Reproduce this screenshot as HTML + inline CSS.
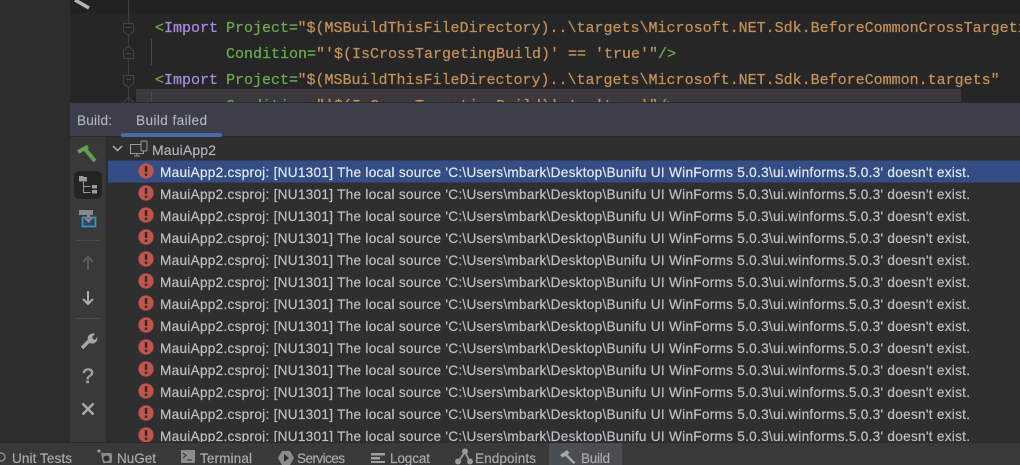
<!DOCTYPE html>
<html><head><meta charset="utf-8"><style>
html,body{margin:0;padding:0;width:1020px;height:465px;overflow:hidden;background:#2b2b2b}
svg{display:block}
.c{font-family:"Liberation Mono",monospace;font-size:15px;stroke-width:.25px}
.u{font-family:"Liberation Sans",sans-serif;font-size:13.6px}
.g{fill:#6aab4f;stroke:#6aab4f}.o{fill:#c39059;stroke:#c39059}.p{fill:#a58ce0;stroke:#a58ce0}
.r{fill:#bcc0c4;stroke:#bcc0c4;stroke-width:.2px}
.t{stroke:#a9adb1;stroke-width:.15px}
</style></head><body>
<svg width="1020" height="465" viewBox="0 0 1020 465" xmlns="http://www.w3.org/2000/svg">
<rect width="1020" height="465" fill="#2d2d2d"/>
<rect x="70" y="0" width="950" height="13" fill="#212223"/>
<rect x="70" y="13" width="950" height="90" fill="#262626"/>
<rect x="136" y="89" width="825" height="13" fill="#3b393e"/>
<path d="M75 0L89 8" stroke="#b5b5b5" stroke-width="3.500" fill="none"/>
<path d="M128.500 0V102" stroke="#3e3e3e" fill="none"/>
<g fill="#262626" stroke="#444">
<path d="M123.500 23.500h10v8l-5 4l-5-4z"/>
<path d="M123.500 58.500v-8l5-4l5 4v8z"/>
<path d="M123.500 75.500h10v8l-5 4l-5-4z"/>
</g>
<path d="M123.500 102l5-4l5 4" stroke="#4a4a4a" fill="none"/>
<path d="M126 27.500h5M126 53.500h5M126 79.500h5" stroke="#4a4a4a"/>
<path d="M151.500 39V65M151.500 91V102" stroke="#4a4a4a"/>
<g class="c" style="white-space:pre">
<text x="155" y="32" class="g">&lt;</text><text x="164" y="32" class="p">Import</text><text x="226" y="32" class="g">Project=</text><text x="297.500" y="32" class="o">"$(MSBuildThisFileDirectory)..\targets\Microsoft.NET.Sdk.BeforeCommonCrossTargeting.targets"</text>
<text x="226" y="58" class="g">Condition=</text><text x="316" y="58" class="o">"'$(IsCrossTargetingBuild)'</text><text x="568" y="58" class="o">==</text><text x="595" y="58" class="o">'true'"</text><text x="658" y="58" class="g">/&gt;</text>
<text x="155" y="84" class="g">&lt;</text><text x="164" y="84" class="p">Import</text><text x="226" y="84" class="g">Project=</text><text x="297.500" y="84" class="o">"$(MSBuildThisFileDirectory)..\targets\Microsoft.NET.Sdk.BeforeCommon.targets"</text>
</g>
<svg x="0" y="85" width="1020" height="17" viewBox="0 85 1020 17"><g class="c"><text x="226" y="110" class="g">Condition=</text><text x="316" y="110" class="o">"'$(IsCrossTargetingBuild)'</text><text x="568" y="110" class="o">!=</text><text x="595" y="110" class="o">'true'"</text><text x="658" y="110" class="g">/&gt;</text></g></svg>
<rect x="0" y="0" width="70" height="465" fill="#2d2d2d"/>
<rect x="70" y="102" width="950" height="34" fill="#3c3f4a"/>
<rect x="70" y="102" width="950" height="1" fill="#2a2a2a"/>
<rect x="70" y="136" width="950" height="1" fill="#292a2c"/>
<rect x="70" y="137" width="36" height="305" fill="#393939"/>
<rect x="106" y="137" width="1" height="305" fill="#2b2b2b"/>
<rect x="107" y="137" width="913" height="305" fill="#2f2f2f"/>
<text x="77" y="125" class="u t" fill="#b4b8bf" textLength="35">Build:</text>
<text x="136" y="125" class="u t" fill="#b4b8bf" textLength="71">Build failed</text>
<rect x="121" y="133" width="101" height="4" rx="2" fill="#4a6aa5"/>
<rect x="108" y="160.500" width="912" height="22" fill="#344d84"/>
<!-- left toolbar -->
<path d="M78 152L88 146.500" stroke="#62a04a" stroke-width="4" fill="none"/>
<path d="M85 149L95 161" stroke="#62a04a" stroke-width="4" fill="none"/>
<rect x="74" y="171" width="28" height="28" rx="5" fill="#242424"/>
<path d="M79 176h4l1 1h3v4.500h-8z" fill="#9a9a9a"/>
<path d="M83.500 182v10.500h7M83.500 186.500h7" stroke="#9a9a9a" fill="none"/>
<rect x="92" y="185" width="5" height="3.500" fill="#9a9a9a"/><rect x="92" y="190" width="5" height="3.500" fill="#9a9a9a"/>
<rect x="79" y="210" width="14" height="5" fill="#8a8a8a"/>
<rect x="82.500" y="217.500" width="13" height="9" fill="#2d4a5e" stroke="#3d93c8" stroke-width="1.700"/>
<path d="M84 218l4.500 5l4.500-5zM87 213h3v6h-3z" fill="#888"/>
<rect x="76" y="240" width="24" height="1" fill="#4c4c4c"/>
<path d="M88 270V257M83 262l5-5l5 5" stroke="#5b5b5b" stroke-width="2" fill="none"/>
<path d="M88 291V304M83 299l5 5l5-5" stroke="#aeaeae" stroke-width="2" fill="none"/>
<rect x="76" y="318" width="24" height="1" fill="#4c4c4c"/>
<path d="M82 348L91 339" stroke="#a6a6a6" stroke-width="3.500" fill="none"/>
<path d="M88 340a5 5 0 0 1 7-6l-3 3l1 2l2 1l2-3a5 5 0 0 1-7 6z" fill="#a6a6a6"/>
<text x="88" y="383" text-anchor="middle" font-family="Liberation Sans,sans-serif" font-size="21" fill="#a0a0a0" stroke="#a0a0a0" stroke-width=".6">?</text>
<path d="M82.500 403.500L93.500 414.500M93.500 403.500L82.500 414.500" stroke="#a8a8a8" stroke-width="2.500" fill="none"/>
<!-- tree -->
<path d="M113 146l4.500 4.500l4.500-4.500" stroke="#aeb0b3" stroke-width="1.500" fill="none"/>
<rect x="130.500" y="144.500" width="13" height="9" fill="none" stroke="#9a9a9a"/>
<path d="M134 156h6M137 154v2" stroke="#9a9a9a"/>
<rect x="141" y="141" width="6" height="10" rx="1" fill="#2f2f2f" stroke="#9a9a9a"/>
<text x="152" y="155" class="u t" fill="#b4b8bf" textLength="64" style="font-size:14px">MauiApp2</text>
<defs>
<g id="e"><circle cx="146" cy="0" r="7.600" fill="#c2544e"/><rect x="144.800" y="-5" width="2.500" height="6" fill="#2f2f2f"/><rect x="144.800" y="2.500" width="2.500" height="2.500" fill="#2f2f2f"/></g>
</defs>
<g><use href="#e" y="171"/><use href="#e" y="193"/><use href="#e" y="215"/><use href="#e" y="237"/><use href="#e" y="259"/><use href="#e" y="281"/><use href="#e" y="303"/><use href="#e" y="325"/><use href="#e" y="347"/><use href="#e" y="369"/><use href="#e" y="391"/><use href="#e" y="413"/><use href="#e" y="435"/></g>
<g class="u r">
<text x="160" y="177" textLength="810" style="fill:#e4e8ef;stroke:#e4e8ef">MauiApp2.csproj: [NU1301] The local source 'C:\Users\mbark\Desktop\Bunifu UI WinForms 5.0.3\ui.winforms.5.0.3' doesn't exist.</text>
<text x="160" y="199" textLength="810">MauiApp2.csproj: [NU1301] The local source 'C:\Users\mbark\Desktop\Bunifu UI WinForms 5.0.3\ui.winforms.5.0.3' doesn't exist.</text>
<text x="160" y="221" textLength="810">MauiApp2.csproj: [NU1301] The local source 'C:\Users\mbark\Desktop\Bunifu UI WinForms 5.0.3\ui.winforms.5.0.3' doesn't exist.</text>
<text x="160" y="243" textLength="810">MauiApp2.csproj: [NU1301] The local source 'C:\Users\mbark\Desktop\Bunifu UI WinForms 5.0.3\ui.winforms.5.0.3' doesn't exist.</text>
<text x="160" y="265" textLength="810">MauiApp2.csproj: [NU1301] The local source 'C:\Users\mbark\Desktop\Bunifu UI WinForms 5.0.3\ui.winforms.5.0.3' doesn't exist.</text>
<text x="160" y="287" textLength="810">MauiApp2.csproj: [NU1301] The local source 'C:\Users\mbark\Desktop\Bunifu UI WinForms 5.0.3\ui.winforms.5.0.3' doesn't exist.</text>
<text x="160" y="309" textLength="810">MauiApp2.csproj: [NU1301] The local source 'C:\Users\mbark\Desktop\Bunifu UI WinForms 5.0.3\ui.winforms.5.0.3' doesn't exist.</text>
<text x="160" y="331" textLength="810">MauiApp2.csproj: [NU1301] The local source 'C:\Users\mbark\Desktop\Bunifu UI WinForms 5.0.3\ui.winforms.5.0.3' doesn't exist.</text>
<text x="160" y="353" textLength="810">MauiApp2.csproj: [NU1301] The local source 'C:\Users\mbark\Desktop\Bunifu UI WinForms 5.0.3\ui.winforms.5.0.3' doesn't exist.</text>
<text x="160" y="375" textLength="810">MauiApp2.csproj: [NU1301] The local source 'C:\Users\mbark\Desktop\Bunifu UI WinForms 5.0.3\ui.winforms.5.0.3' doesn't exist.</text>
<text x="160" y="397" textLength="810">MauiApp2.csproj: [NU1301] The local source 'C:\Users\mbark\Desktop\Bunifu UI WinForms 5.0.3\ui.winforms.5.0.3' doesn't exist.</text>
<text x="160" y="419" textLength="810">MauiApp2.csproj: [NU1301] The local source 'C:\Users\mbark\Desktop\Bunifu UI WinForms 5.0.3\ui.winforms.5.0.3' doesn't exist.</text>
<text x="160" y="441" textLength="810">MauiApp2.csproj: [NU1301] The local source 'C:\Users\mbark\Desktop\Bunifu UI WinForms 5.0.3\ui.winforms.5.0.3' doesn't exist.</text>
</g>
<!-- bottom bar -->
<rect x="0" y="442" width="1020" height="23" fill="#393939"/>
<rect x="0" y="442" width="1020" height="1" fill="#2a2a2a"/>
<rect x="549" y="443" width="73" height="22" fill="#4a4d52"/>
<g class="u t" fill="#a9adb1">
<text x="12" y="463" textLength="60">Unit Tests</text>
<text x="117" y="463" textLength="39">NuGet</text>
<text x="200" y="463" textLength="52">Terminal</text>
<text x="297" y="463" textLength="48">Services</text>
<text x="390" y="463" textLength="40">Logcat</text>
<text x="475" y="463" textLength="61">Endpoints</text>
<text x="581" y="463" textLength="29">Build</text>
</g>
<circle cx="1" cy="457" r="4" fill="none" stroke="#888" stroke-width="1.500"/>
<circle cx="99" cy="451" r="1.500" fill="#aaa"/><path d="M101 453h9a2 2 0 0 1 2 2v6a2 2 0 0 1-2 2h-7z" fill="#8c8c8c"/><circle cx="106.500" cy="458.500" r="3" fill="#2d2d2d"/>
<rect x="181" y="450" width="14" height="13" fill="#8c8c8c"/><path d="M183 453l3 2.500l-3 2.500M187 460h5" stroke="#2d2d2d" fill="none"/>
<path d="M278 458l4-7h8l4 7l-4 7h-8z" fill="#8c8c8c"/><path d="M284 454l5 4l-5 4z" fill="#2d2d2d"/>
<path d="M371 453h14v2.500h-14zM371 457h9v2.500h-9zM371 461h14v2h-14z" fill="#a0a0a0"/>
<g fill="none" stroke="#9a9a9a" stroke-width="1.800"><path d="M465 452L458 462M465 452L470 462"/></g><circle cx="465" cy="451.500" r="3" fill="#9a9a9a"/><circle cx="458" cy="461.500" r="3" fill="#9a9a9a"/><circle cx="470" cy="461.500" r="3" fill="#9a9a9a"/>
<path d="M560 455l7-5l2.500 2.500l-2 2l8 8l-2 1.500l-8-8l-3 1.500z" fill="#a8a8a8"/>
</svg>
</body></html>
